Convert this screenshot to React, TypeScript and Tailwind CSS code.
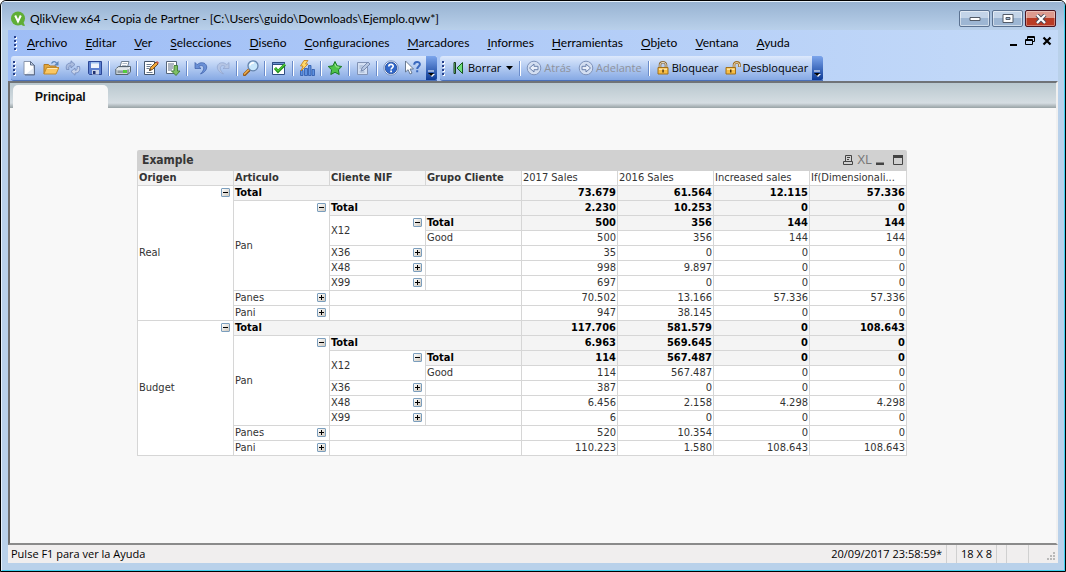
import type { ReactNode } from "react";

const ui = "font-['Lato','Open_Sans',sans-serif]";
const small = "font-['Open_Sans','Noto_Sans',sans-serif] text-[11px]";
const grid = "font-['DejaVu_Sans_Condensed','DejaVu_Sans',sans-serif]";

/* ---------- icons ---------- */

function Svg({ children, size = 16 }: { children: ReactNode; size?: number }) {
  return (
    <svg width={size} height={size} viewBox="0 0 16 16" fill="none" className="shrink-0" aria-hidden="true">
      {children}
    </svg>
  );
}

const icons = {
  nuevo: (
    <Svg>
      <path d="M3 1.500h6.500L13 5v9.500H3z" fill="#fff" stroke="#8a97ae" />
      <path d="M9.500 1.500V5H13z" fill="#cfdbea" stroke="#5f6f8b" />
      <path d="M12.500 8v6H5z" fill="#e1e9f3" />
      <path d="M13.500 5v10H4" stroke="#5f6f8b" />
    </Svg>
  ),
  abrir: (
    <Svg>
      <path d="M1 14V4.500h4.500L7 6h6v3" fill="#e2a63c" stroke="#b47a22" />
      <path d="M1 14l2.600-6.500H16L13 14z" fill="#fbc760" stroke="#c08a2c" />
      <path d="M4.300 8.500H14" stroke="#ffe9b5" />
      <path d="M8.500 3.500C10 1 12 1 13.500 3" stroke="#5c86b8" strokeWidth="1.300" />
      <path d="M15.500 1v4.500H11z" fill="#5c86b8" />
    </Svg>
  ),
  recargar: (
    <Svg>
      <path d="M1.500 9.500C.5 5 2.500 3 6 3V.8l4 3.700-4 3.500V5.800C4 5.600 3.300 7 4 9.500z" fill="#a9bbde" stroke="#7289ba" strokeWidth=".8" />
      <path d="M14.500 6.500c1 4.500-1 6.500-4.500 6.500v2.200l-4-3.700L10 8v2.200c2 .2 2.700-1.200 2-3.700z" fill="#c6d2ea" stroke="#7289ba" strokeWidth=".8" />
    </Svg>
  ),
  guardar: (
    <Svg>
      <path d="M1.500 1.500h13v13h-12l-1-1z" fill="#5c80cf" stroke="#2b4796" />
      <path d="M4 2h8v6H4z" fill="#eef4fc" />
      <path d="M4 2h8v1.500H4z" fill="#9cc0ee" />
      <path d="M5 10h7v4.500H5z" fill="#c9d3e6" />
      <path d="M6 11h2.500v3H6z" fill="#1f2f6e" />
    </Svg>
  ),
  imprimir: (
    <Svg>
      <path d="M5 7l1.500-5.500H14L12.500 7z" fill="#fff" stroke="#6d7f92" />
      <path d="M7.500 3.500h4.500M7 5.500h4.500" stroke="#9aa9ba" strokeWidth=".8" />
      <path d="M.8 9L3.500 6.500h12v5.300L13 14.500H.8z" fill="#cdd6dd" stroke="#56646f" />
      <path d="M1.300 9h11.500l2.200-2" stroke="#fff" strokeWidth=".8" />
      <path d="M2.500 10.500h9v2.500h-9z" fill="#8c989f" />
      <path d="M8 10h4v3H8z" fill="#53cc3c" />
      <path d="M13 9.500v4.500" stroke="#56646f" />
    </Svg>
  ),
  editar: (
    <Svg>
      <path d="M1.500 1.500h10v13h-10z" fill="#fff" stroke="#45566e" />
      <path d="M3.500 4.500h5M3.500 6.500h4M3.500 8.500h3M3.500 12.500h6" stroke="#6c7c91" />
      <path d="M6.500 10.500l1-3L13 2l2 2-5.500 5.500z" fill="#f0a73a" stroke="#5c3d1a" strokeWidth=".9" />
      <path d="M13 2l1-1 2 1.800L15 4z" fill="#d2594b" />
      <path d="M6.200 10.800l.6-1.800 1.200 1.200z" fill="#222" />
    </Svg>
  ),
  script: (
    <Svg>
      <path d="M1.500 1.500h10v12h-10z" fill="#fff" stroke="#56667c" />
      <path d="M3 4h6M3 6h5M3 8h5M3 10h4" stroke="#5b6d86" />
      <path d="M9 5.500h3.500V11H15l-4 4.500L6.500 11H9z" fill="#7fbf63" stroke="#3f7a38" strokeWidth=".9" />
    </Svg>
  ),
  deshacer: (
    <Svg>
      <path d="M2 2.500v6h6L5.800 6.500C8.500 4.500 11.500 6 10.500 9.500 10 11 9 12.300 7.500 14 12 12.300 14.500 9 13.500 5.800 12.300 2.300 7.500 1.500 4.200 4.700z" fill="#6a90d6" stroke="#3a5ba6" strokeWidth=".7" />
    </Svg>
  ),
  rehacer: (
    <Svg>
      <path d="M14 2.500v6H8l2.200-2C7.500 4.500 4.500 6 5.500 9.500 6 11 7 12.300 8.500 14 4 12.300 1.500 9 2.500 5.800 3.700 2.300 8.500 1.500 11.800 4.700z" fill="#b5c5e4" stroke="#8fa4cd" strokeWidth=".7" />
    </Svg>
  ),
  buscar: (
    <Svg>
      <path d="M1.500 14.500l4.500-4.500" stroke="#94591b" strokeWidth="3.200" strokeLinecap="round" />
      <path d="M1.500 14l4-4" stroke="#f0b04c" strokeWidth="1.500" strokeLinecap="round" />
      <circle cx="10" cy="5.800" r="5" fill="#c8e7fb" stroke="#6584ad" strokeWidth="1.300" />
      <path d="M7 5.500C7.300 3.500 9 2.500 11 3" stroke="#fff" strokeWidth="1.600" />
    </Svg>
  ),
  seleccion: (
    <Svg>
      <path d="M1.500 2.500h12v12h-12z" fill="#fff" stroke="#2f4d83" />
      <path d="M1.500 2.500h12v2h-12z" fill="#6d94cf" stroke="#2f4d83" />
      <path d="M4 8l3 3.500L14 4.500" stroke="#1e8a1a" strokeWidth="2.800" />
      <path d="M4 8l3 3L14 4" stroke="#4fca37" strokeWidth="1.200" />
    </Svg>
  ),
  grafico: (
    <Svg>
      <path d="M5.500 8.500h3v7h-3zM9.500 5.500h2.500v10H9.500zM13 9.500h2.500v6H13z" fill="#5d91e0" stroke="#2c58a8" strokeWidth=".8" />
      <path d="M1.500 10.500h2.500v5H1.500z" fill="#5d91e0" stroke="#2c58a8" strokeWidth=".8" />
      <path d="M5 .5h4L6.500 4H9l-7 7 2-5H1.500z" fill="#ffd968" stroke="#c17b18" strokeWidth=".8" />
    </Svg>
  ),
  estrella: (
    <Svg>
      <path d="M8 1.500l2.100 4.300 4.700.7-3.400 3.300.8 4.700L8 12.300l-4.200 2.200.8-4.700L1.200 6.500l4.700-.7z" fill="#4fc34a" stroke="#1d7a26" strokeLinejoin="round" />
      <path d="M8 4l1.200 2.800 2.800.4" stroke="#a5eb97" />
    </Svg>
  ),
  nota: (
    <Svg>
      <path d="M2.500 2.500h10v12h-10z" fill="#d4e0f3" stroke="#8293b4" />
      <path d="M4.500 6h4M4.500 8h3M4.500 12h5" stroke="#9aadca" />
      <path d="M6 11l1-3L13 2l2 2-6 6z" fill="#b7c7e1" stroke="#7085ab" strokeWidth=".9" />
    </Svg>
  ),
  ayuda: (
    <Svg>
      <circle cx="8" cy="8" r="7.200" fill="#fff" stroke="#7993c2" />
      <circle cx="8" cy="8" r="5.800" fill="#2f66c9" stroke="#1e4797" strokeWidth=".8" />
      <path d="M5.800 6.500C5.900 3.700 10.300 3.900 10.200 6.300 10.200 7.800 8.100 7.900 8.100 9.600" stroke="#fff" strokeWidth="1.700" />
      <path d="M7.200 10.600H9v1.700H7.200z" fill="#fff" />
    </Svg>
  ),
  queEs: (
    <Svg>
      <path d="M.5 1v11l2.600-2.300 1.900 4.300 2-.9-1.900-4.100h3.400z" fill="#fff" stroke="#5f7189" strokeWidth=".9" />
      <path d="M9.200 4.800C9.200 1 15 1.200 14.900 4.300 14.900 6.300 12.200 6.600 12.200 8.900" stroke="#3a68bd" strokeWidth="2" />
      <path d="M11.200 10.200h2v2h-2z" fill="#3a68bd" />
    </Svg>
  ),
  borrar: (
    <Svg>
      <path d="M4 2.500h1.500v11H4z" fill="#6fe07a" stroke="#1d3a22" />
      <path d="M12.500 2.500v11L7 8z" fill="#6fe07a" stroke="#16581f" />
    </Svg>
  ),
  atras: (
    <Svg>
      <circle cx="8" cy="8" r="6.800" fill="#d3def1" stroke="#7f93ba" />
      <path d="M3.500 8L8 4v2.300h4v3.400H8V12z" fill="#e9effa" stroke="#6a80ab" />
    </Svg>
  ),
  adelante: (
    <Svg>
      <circle cx="8" cy="8" r="6.800" fill="#d3def1" stroke="#7f93ba" />
      <path d="M12.500 8L8 4v2.300H4v3.400h4V12z" fill="#e9effa" stroke="#6a80ab" />
    </Svg>
  ),
  bloquear: (
    <Svg>
      <path d="M5 8V5C5 1.300 11 1.300 11 5v3" stroke="#8a6a3a" strokeWidth="2.600" />
      <path d="M5 8V5C5 1.500 11 1.500 11 5v3" stroke="#e6dcc8" />
      <path d="M3 7.500h10v6.500H3z" fill="#f6bd45" stroke="#a2701a" />
      <path d="M4 8.500h8v1.500H4z" fill="#ffe3a0" />
      <path d="M7.300 9.500h1.500v3H7.300z" fill="#54380c" />
    </Svg>
  ),
  desbloquear: (
    <Svg>
      <path d="M9 8V5c0-3.500 5.500-3.500 5.500 0v2" stroke="#9c6d26" strokeWidth="2.600" />
      <path d="M9 8V5c0-3.200 5.500-3.200 5.500 0v1.500" stroke="#f3e2bd" />
      <path d="M1 7.500h9.500v6.500H1z" fill="#f6bd45" stroke="#a2701a" />
      <path d="M2 8.500h7.500v1.500H2z" fill="#ffe3a0" />
      <path d="M5 9.500h1.500v3H5z" fill="#54380c" />
    </Svg>
  ),
};

/* ---------- window chrome ---------- */

function TitleBar() {
  const frame =
    "flex h-[17px] w-[31px] items-center justify-center rounded-[2px] border border-[#5b7291] bg-linear-to-b from-[#c3d4e8] from-50% to-[#9db6d3] to-50% shadow-[inset_0_0_0_1px_rgba(255,255,255,0.5)]";
  return (
    <header className="flex h-7 shrink-0 items-start justify-between bg-linear-to-b from-[#98b3d2] to-[#b9d0ea] px-2">
      <div className="flex h-full items-center gap-1 pt-[5px]">
        <svg width="16" height="16" viewBox="0 0 16 16" className="shrink-0" aria-hidden="true">
          <circle cx="8" cy="7.500" r="7" fill="#5fae35" />
          <path d="M10.500 12l2.500-1.500 2 4.300c-2 .4-3.500-.6-4.500-2.800z" fill="#5fae35" />
          <path d="M5.200 4.500L8 10.500l2.800-6" stroke="#fff" strokeWidth="2" fill="none" />
        </svg>
        <h1 className="text-[12px] leading-4 whitespace-nowrap text-black">
          QlikView x64 - Copia de Partner - [C:\Users\guido\Downloads\Ejemplo.qvw*]
        </h1>
      </div>
      <div className="flex gap-[2px] pt-2">
        <button aria-label="Minimizar" className={frame}>
          <svg width="12" height="6" viewBox="0 0 12 6" aria-hidden="true">
            <path d="M1 1.500h10v3H1z" fill="#fff" stroke="#525a66" />
          </svg>
        </button>
        <button aria-label="Maximizar" className={frame}>
          <svg width="12" height="10" viewBox="0 0 12 10" aria-hidden="true">
            <path d="M1 .5h10v8H1z" fill="#fff" stroke="#525a66" />
            <path d="M4 3.500h4v2H4z" fill="#9db6d3" stroke="#525a66" />
          </svg>
        </button>
        <button
          aria-label="Cerrar"
          className="flex h-[17px] w-[31px] items-center justify-center rounded-[2px] border border-[#4a1420] bg-linear-to-b from-[#dd9a8e] from-50% to-[#b93b24] to-50% shadow-[inset_0_0_0_1px_rgba(255,255,255,0.35)]"
        >
          <svg width="12" height="10" viewBox="0 0 12 10" aria-hidden="true">
            <path d="M2 1l8 8M10 1L2 9" stroke="#4a4a58" strokeWidth="4" />
            <path d="M2 1l8 8M10 1L2 9" stroke="#fff" strokeWidth="2.200" />
          </svg>
        </button>
      </div>
    </header>
  );
}

function Grip() {
  return (
    <span className="flex w-[3px] shrink-0 flex-col gap-[2px]" aria-hidden="true">
      {[0, 1, 2, 3].map((i) => (
        <span key={i} className="size-[2px] bg-[#27418c] shadow-[1px_1px_0_#fff]" />
      ))}
    </span>
  );
}

const menus = [
  "Archivo", "Editar", "Ver", "Selecciones", "Diseño", "Configuraciones",
  "Marcadores", "Informes", "Herramientas", "Objeto", "Ventana", "Ayuda",
];

function MenuBar() {
  return (
    <nav className="flex h-[26px] items-center px-[6px]" aria-label="Menú principal">
      <Grip />
      <ul className="flex grow items-center gap-[18px] pl-[10px]">
        {menus.map((m) => (
          <li key={m}>
            <button className="block text-[12px] leading-4 text-black">
              <span className="underline underline-offset-2">{m[0]}</span>
              {m.slice(1)}
            </button>
          </li>
        ))}
      </ul>
      <div className="flex items-center gap-[7px] pb-1">
        <button aria-label="Minimizar documento">
          <svg width="10" height="10" viewBox="0 0 10 10" aria-hidden="true"><path d="M2 8h7v2H2z" fill="#000" /></svg>
        </button>
        <button aria-label="Restaurar documento">
          <svg width="10" height="10" viewBox="0 0 10 10" fill="none" stroke="#000" aria-hidden="true">
            <path d="M2.500 3V.5h7v5H7.500M2 1.500h8M.5 3.500h7v5h-7zM0 4.500h8" />
          </svg>
        </button>
        <button aria-label="Cerrar documento">
          <svg width="10" height="10" viewBox="0 0 10 10" fill="none" aria-hidden="true">
            <path d="M1.500 1.500l7 7M8.500 1.500l-7 7" stroke="#000" strokeWidth="2.200" />
          </svg>
        </button>
      </div>
    </nav>
  );
}

function Sep() {
  return <span className="mx-[2px] h-[15px] w-[2px] shrink-0 border-r border-l border-r-white border-l-[#6a8ccb]" aria-hidden="true" />;
}

function IconButton({ label, children }: { label: string; children: ReactNode }) {
  return (
    <button aria-label={label} className="flex h-5 w-[22px] shrink-0 items-center justify-center">
      {children}
    </button>
  );
}

function Overflow() {
  return (
    <button
      aria-label="Más botones"
      className="flex w-[11px] shrink-0 items-end justify-center self-stretch rounded-r-[2px] bg-linear-to-b from-[#7da6ec] to-[#0b3a97] pb-[3px]"
    >
      <svg width="7" height="7" viewBox="0 0 7 7" aria-hidden="true">
        <path d="M0 1h6" stroke="#fff" />
        <path d="M1 4h6L4 7z" fill="#fff" />
        <path d="M0 3h6L3 6z" fill="#000" />
      </svg>
    </button>
  );
}

const bar = "flex h-[25px] items-center rounded-l-[3px] border-b border-[#4a70b8] bg-linear-to-b from-[#dde9fc] to-[#86a9e4]";
const textButton = "flex items-center pr-1 pl-[3px] leading-4";

function Toolbars() {
  return (
    <div className="flex h-[25px] items-start gap-[3px] pl-[3px]">
      <div className={bar} role="toolbar" aria-label="Estándar">
        <span className="flex w-[7px] justify-center"><Grip /></span>
        <IconButton label="Nuevo">{icons.nuevo}</IconButton>
        <IconButton label="Abrir">{icons.abrir}</IconButton>
        <IconButton label="Recargar parcial">{icons.recargar}</IconButton>
        <IconButton label="Guardar">{icons.guardar}</IconButton>
        <Sep />
        <IconButton label="Imprimir">{icons.imprimir}</IconButton>
        <Sep />
        <IconButton label="Editar script">{icons.editar}</IconButton>
        <IconButton label="Recargar">{icons.script}</IconButton>
        <Sep />
        <IconButton label="Deshacer">{icons.deshacer}</IconButton>
        <IconButton label="Rehacer">{icons.rehacer}</IconButton>
        <Sep />
        <IconButton label="Buscar">{icons.buscar}</IconButton>
        <Sep />
        <IconButton label="Selecciones actuales">{icons.seleccion}</IconButton>
        <Sep />
        <IconButton label="Gráfico rápido">{icons.grafico}</IconButton>
        <Sep />
        <IconButton label="Añadir marcador">{icons.estrella}</IconButton>
        <Sep />
        <IconButton label="Notas">{icons.nota}</IconButton>
        <Sep />
        <IconButton label="Ayuda">{icons.ayuda}</IconButton>
        <IconButton label="¿Qué es esto?">{icons.queEs}</IconButton>
        <span className="w-[2px]" />
        <Overflow />
      </div>
      <div className={`${bar} ${small}`} role="toolbar" aria-label="Navegación">
        <span className="flex w-[7px] justify-center"><Grip /></span>
        <button className={`${textButton} gap-[2px] text-black`}>
          {icons.borrar}
          Borrar
          <svg width="7" height="4" viewBox="0 0 7 4" className="ml-[3px]" aria-hidden="true"><path d="M0 0h7L3.500 4z" fill="#000" /></svg>
        </button>
        <Sep />
        <button disabled className={`${textButton} gap-[2px] text-[#8e929c]`}>{icons.atras}Atrás</button>
        <button disabled className={`${textButton} gap-[2px] text-[#8e929c]`}>{icons.adelante}Adelante</button>
        <Sep />
        <button className={`${textButton} gap-[1px] text-black`}>{icons.bloquear}Bloquear</button>
        <button className={`${textButton} gap-[1px] text-black`}>{icons.desbloquear}Desbloquear</button>
        <Overflow />
      </div>
    </div>
  );
}

/* ---------- pivot table ---------- */

type Cell = { text?: string; rows?: number; cols?: number; toggle?: "+" | "-"; total?: boolean };
type Row = { dims: Cell[]; values: string[]; total?: boolean };

const total = (cols: number): Cell => ({ text: "Total", cols, total: true });

function group(origen: string, v: string[][]): Row[] {
  return [
    { dims: [{ text: origen, rows: 9, toggle: "-" }, total(3)], values: v[0], total: true },
    { dims: [{ text: "Pan", rows: 6, toggle: "-" }, total(2)], values: v[1], total: true },
    { dims: [{ text: "X12", rows: 2, toggle: "-" }, total(1)], values: v[2], total: true },
    { dims: [{ text: "Good" }], values: v[3] },
    { dims: [{ text: "X36", toggle: "+" }, {}], values: v[4] },
    { dims: [{ text: "X48", toggle: "+" }, {}], values: v[5] },
    { dims: [{ text: "X99", toggle: "+" }, {}], values: v[6] },
    { dims: [{ text: "Panes", toggle: "+" }, { cols: 2 }], values: v[7] },
    { dims: [{ text: "Pani", toggle: "+" }, { cols: 2 }], values: v[8] },
  ];
}

const rows: Row[] = [
  ...group("Real", [
    ["73.679", "61.564", "12.115", "57.336"],
    ["2.230", "10.253", "0", "0"],
    ["500", "356", "144", "144"],
    ["500", "356", "144", "144"],
    ["35", "0", "0", "0"],
    ["998", "9.897", "0", "0"],
    ["697", "0", "0", "0"],
    ["70.502", "13.166", "57.336", "57.336"],
    ["947", "38.145", "0", "0"],
  ]),
  ...group("Budget", [
    ["117.706", "581.579", "0", "108.643"],
    ["6.963", "569.645", "0", "0"],
    ["114", "567.487", "0", "0"],
    ["114", "567.487", "0", "0"],
    ["387", "0", "0", "0"],
    ["6.456", "2.158", "4.298", "4.298"],
    ["6", "0", "0", "0"],
    ["520", "10.354", "0", "0"],
    ["110.223", "1.580", "108.643", "108.643"],
  ]),
];

const edge = "border-r border-b border-[#d6d6d6] p-0";

function Toggle({ sign, label }: { sign: "+" | "-"; label: string }) {
  return (
    <button
      aria-label={(sign === "+" ? "Expandir " : "Contraer ") + label}
      className="absolute top-[2px] right-[3px] flex size-[9px] items-center justify-center rounded-[1px] border border-[#7b9ebd] bg-linear-to-br from-white to-[#cfc8bd]"
    >
      <svg width="5" height="5" viewBox="0 0 5 5" stroke="#000" className="shrink-0" aria-hidden="true">
        <path d={sign === "+" ? "M0 2.500h5M2.500 0v5" : "M0 2.500h5"} />
      </svg>
    </button>
  );
}

function PivotTable() {
  return (
    <section className={`w-[770px] max-w-full text-[#333] ${grid}`}>
      <div className="flex h-[21px] items-center justify-between rounded-t-[2px] bg-[#d1d1d1] pr-1 pb-[2px] pl-[5px]">
        <h2 className="text-[12px] leading-4 font-bold text-[#363636]">Example</h2>
        <div className="flex items-center gap-1 text-[#444]">
          <button aria-label="Imprimir tabla">
            <svg width="10" height="10" viewBox="0 0 10 10" fill="none" stroke="currentColor" aria-hidden="true">
              <path d="M2.500 6V.5h6V6M4 2.500h3M4 4.500h2M.5 6.500h9v3h-9z" />
            </svg>
          </button>
          <button className="font-['Liberation_Sans_Narrow','Liberation_Sans',sans-serif] text-[12px] leading-3 text-[#777]">XL</button>
          <button aria-label="Minimizar tabla">
            <svg width="9" height="10" viewBox="0 0 9 10" aria-hidden="true"><path d="M0 7.500h8V10H0z" fill="currentColor" /></svg>
          </button>
          <button aria-label="Maximizar tabla" className="ml-1">
            <svg width="10" height="10" viewBox="0 0 10 10" fill="none" aria-hidden="true">
              <path d="M.5.5h9v9h-9z" stroke="currentColor" />
              <path d="M0 0h10v3H0z" fill="currentColor" />
            </svg>
          </button>
        </div>
      </div>
      <table className="w-full table-fixed border-separate border-spacing-0 border-l border-[#d6d6d6] bg-white text-[11px] leading-[14px]">
        <colgroup>
          {[0, 1, 2, 3, 4, 5, 6].map((i) => (
            <col key={i} className="w-24" />
          ))}
          <col />
        </colgroup>
        <thead>
          <tr>
            {["Origen", "Articulo", "Cliente NIF", "Grupo Cliente"].map((h) => (
              <th key={h} scope="col" className={`${edge} bg-[#f4f4f4] pl-[1px] text-left font-bold whitespace-nowrap`}>{h}</th>
            ))}
            {["2017 Sales", "2016 Sales", "Increased sales", "If(Dimensionali..."].map((h) => (
              <th key={h} scope="col" className={`${edge} pl-[1px] text-left font-normal whitespace-nowrap`}>{h}</th>
            ))}
          </tr>
        </thead>
        <tbody>
          {rows.map((r, i) => (
            <tr key={i}>
              {r.dims.map((c, j) => (
                <td
                  key={j}
                  rowSpan={c.rows}
                  colSpan={c.cols}
                  className={`${edge} relative h-[15px] pl-[1px] align-middle ${c.total ? "bg-[#f4f4f4] font-bold text-black" : ""}`}
                >
                  {c.text}
                  {c.toggle && <Toggle sign={c.toggle} label={c.text ?? ""} />}
                </td>
              ))}
              {r.values.map((v, j) => (
                <td key={j} className={`${edge} pr-[1px] text-right ${r.total ? "bg-[#f4f4f4] font-bold text-black" : ""}`}>{v}</td>
              ))}
            </tr>
          ))}
        </tbody>
      </table>
    </section>
  );
}

/* ---------- page ---------- */

function StatusBar() {
  return (
    <footer className={`flex h-[18px] shrink-0 items-stretch bg-[#f0eeee] pl-[3px] leading-[18px] text-black ${small}`}>
      <span className="grow">Pulse F1 para ver la Ayuda</span>
      <span className="border-r border-[#d0d0d0] pr-1">20/09/2017 23:58:59*</span>
      <span className="w-[10px] border-r border-[#d0d0d0]" />
      <span className="border-r border-[#d0d0d0] px-1">18 X 8</span>
      <span className="w-[10px] border-r border-[#d0d0d0]" />
      <span className="w-[22px] border-r border-[#d0d0d0]" />
      <span className="flex w-[29px] items-end justify-end pr-[2px] pb-[2px]">
        <svg width="9" height="9" viewBox="0 0 9 9" fill="#b9b9b9" aria-hidden="true">
          <path d="M6 0h2v2H6zM6 3h2v2H6zM3 3h2v2H3zM6 6h2v2H6zM3 6h2v2H3zM0 6h2v2H0z" />
        </svg>
      </span>
    </footer>
  );
}

export default function App() {
  return (
    <div className={`flex h-screen flex-col overflow-hidden rounded-t-[6px] border border-black bg-[#b9d1ea] ${ui}`}>
      <div className="flex min-h-0 grow flex-col rounded-t-[5px] border border-t-[#e6f1fb] border-r-[#3fd0ee] border-b-[#3fd0ee] border-l-[#e6f1fb]">
        <TitleBar />
        <div className="mx-[6px] mb-[7px] flex min-h-0 grow flex-col">
          <div className="shrink-0 bg-linear-to-r from-[#9ebdf6] to-[#c4daf8]">
            <MenuBar />
            <Toolbars />
          </div>
          <main className="flex min-h-0 grow flex-col border-2 border-t-[#6f7377] border-r-[#f0f0f0] border-b-[#8a8a8a] border-l-[#6f6f6f] bg-[#f8f8f8]">
            <div className="flex h-[25px] shrink-0 items-end bg-linear-to-b from-[#b9c8cf] via-[#d5dde2] via-80% to-[#98a2a5] pl-[3px]" role="tablist">
              <button role="tab" aria-selected="true" className="h-[23px] rounded-t-[5px] bg-[#f8f8f8] px-[22px] font-['Liberation_Sans',sans-serif] text-[12px] font-bold text-[#111]">
                Principal
              </button>
            </div>
            <div className="min-h-0 grow overflow-hidden pt-[42px] pl-[127px]">
              <PivotTable />
            </div>
          </main>
          <StatusBar />
        </div>
      </div>
    </div>
  );
}
